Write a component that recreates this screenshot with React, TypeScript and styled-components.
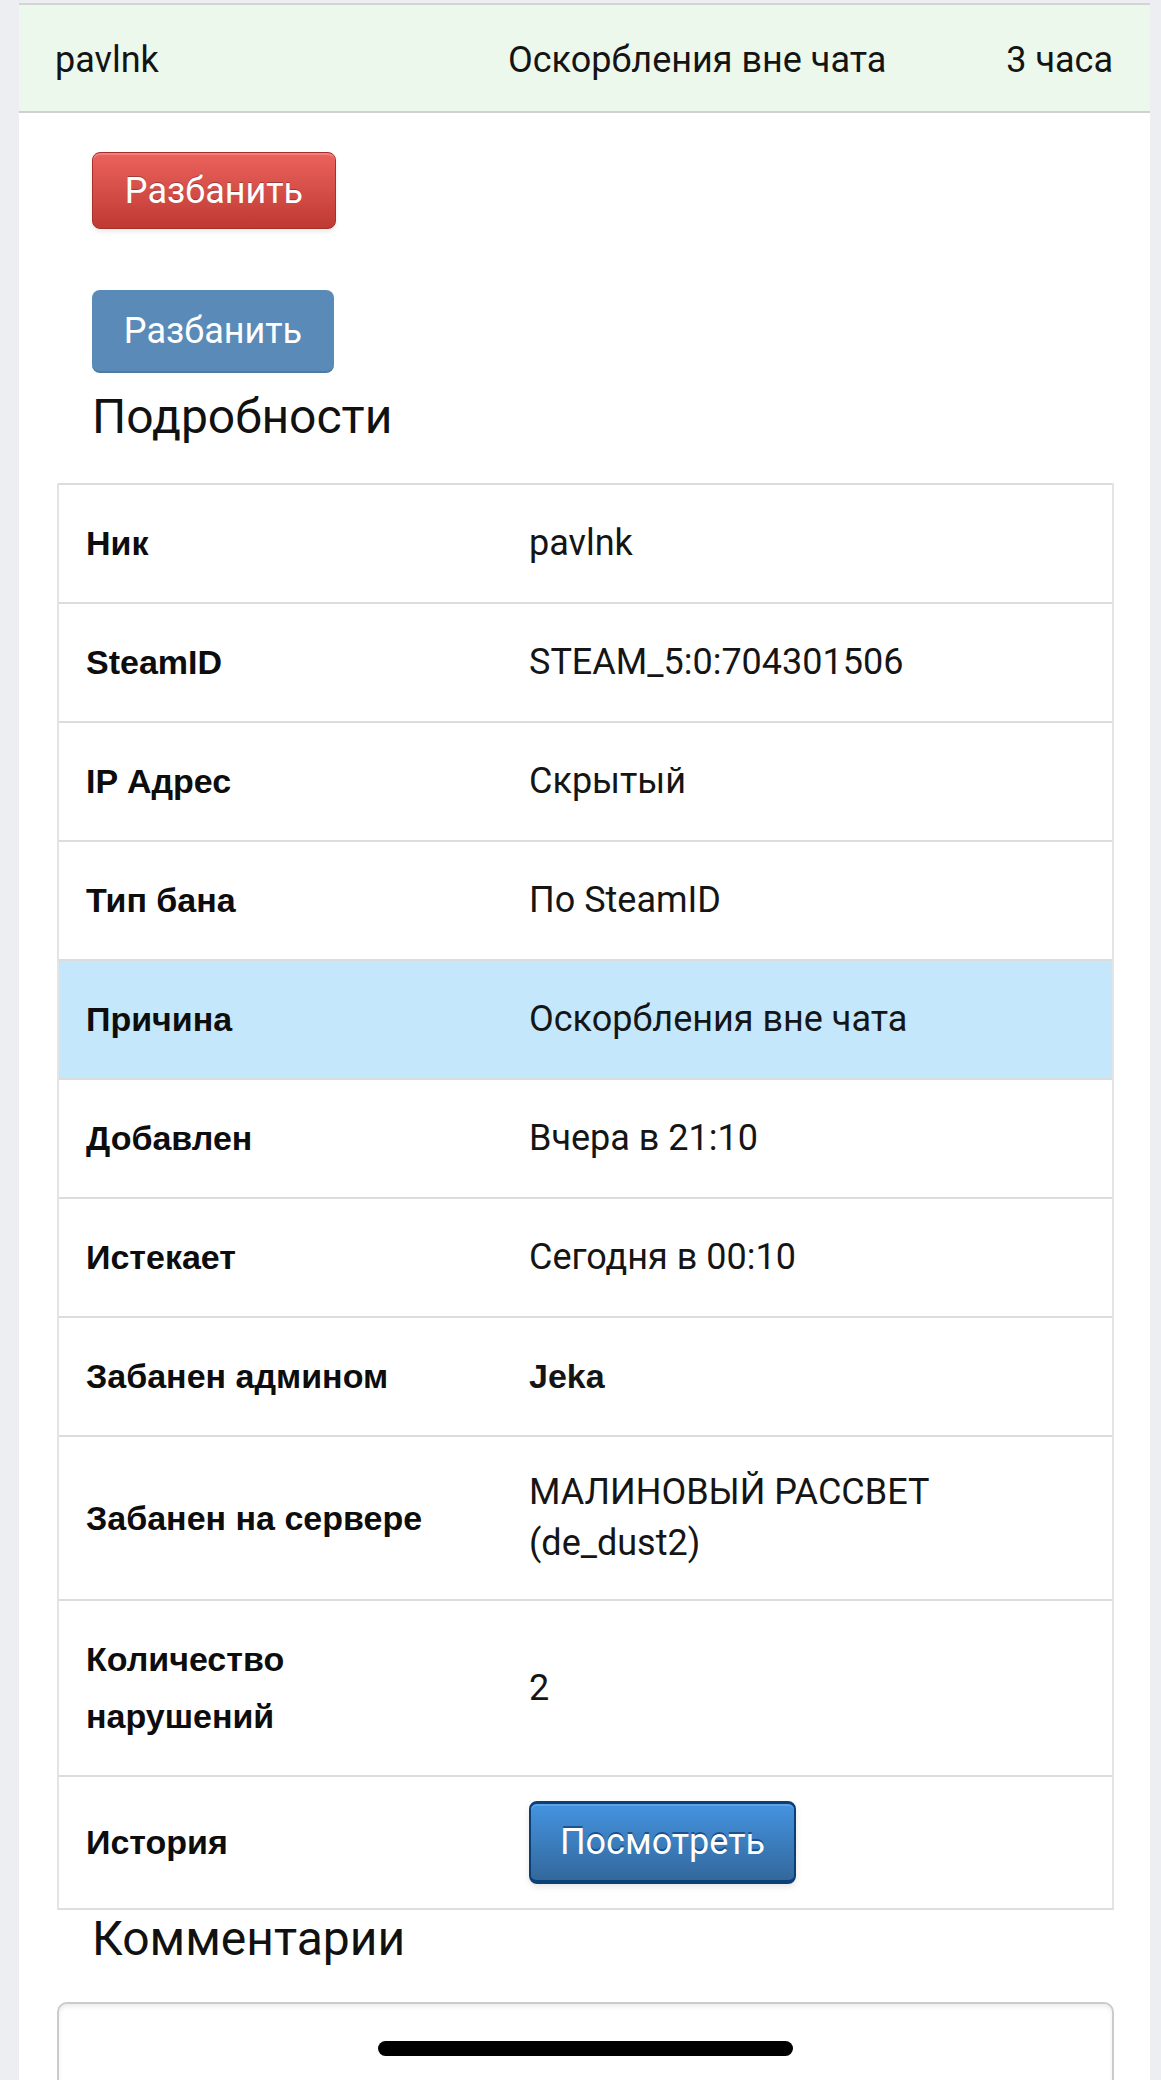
import React from "react";
import styled, { createGlobalStyle, css } from "styled-components";

const GlobalStyle = createGlobalStyle`
  html, body {
    margin: 0;
    padding: 0;
    background: #eceef1;
  }
  body {
    font-family: Roboto, "Noto Sans", "Liberation Sans", sans-serif;
    color: #141414;
    -webkit-font-smoothing: antialiased;
  }
`;

const Page = styled.div`
  padding: 3px 11px 0 19px;
`;

const Card = styled.main`
  background: #ffffff;
  min-height: 2120px;
`;

const SummaryRow = styled.div`
  display: grid;
  grid-template-columns: 453px auto 1fr;
  align-items: center;
  height: 110px;
  padding: 4px 37px 0 36px;
  box-sizing: border-box;
  background: #edf8ec;
  border-top: 2px solid #d3d5d3;
  border-bottom: 2px solid #cfd1cf;
  font-size: 36px;
`;

const SummaryCell = styled.span<{ $right?: boolean }>`
  white-space: nowrap;
  text-align: ${(p) => (p.$right ? "right" : "left")};
`;

const Body = styled.div`
  padding: 0 36px 0 38px;
`;

const Actions = styled.div`
  display: flex;
  flex-direction: column;
  align-items: flex-start;
  gap: 61px;
  padding: 39px 0 0 35px;
`;

const buttonBase = css`
  display: inline-flex;
  align-items: center;
  justify-content: center;
  box-sizing: border-box;
  font-family: Roboto, "Noto Sans", sans-serif;
  font-size: 36px;
  color: #ffffff;
  border-radius: 8px;
  cursor: pointer;
`;

const DangerButton = styled.button`
  ${buttonBase};
  width: 244px;
  height: 77px;
  border: 1px solid #a7302b;
  background: linear-gradient(#ec625d, #bf3a33);
  box-shadow: inset 0 2px 0 rgba(255, 255, 255, 0.2), 0 3px 5px rgba(0, 0, 0, 0.08);
  text-shadow: 0 -1px 0 rgba(0, 0, 0, 0.3);
`;

const MutedButton = styled.button`
  ${buttonBase};
  width: 242px;
  height: 83px;
  border: none;
  border-bottom: 2px solid #4d7aa3;
  background: #5a8bb8;
`;

const PrimaryButton = styled.button`
  ${buttonBase};
  width: 267px;
  height: 83px;
  border: 2px solid #0b3f78;
  border-top-width: 3px;
  border-bottom-width: 4px;
  background: linear-gradient(#4493e0, #33689c);
  box-shadow: inset 0 2px 0 rgba(255, 255, 255, 0.15), 0 3px 6px rgba(0, 0, 0, 0.1);
  text-shadow: 0 -2px 0 rgba(0, 40, 90, 0.55);
`;

const SectionTitle = styled.h2<{ $top: number; $bottom: number }>`
  margin: ${(p) => p.$top}px 0 ${(p) => p.$bottom}px 35px;
  font-family: Roboto, "Noto Sans", sans-serif;
  font-size: 48px;
  font-weight: 400;
  line-height: 52px;
  color: #111;
`;

const Table = styled.div`
  border-left: 2px solid #e4e4e4;
  border-right: 2px solid #e4e4e4;
  border-bottom: 2px solid #dedede;
`;

const Row = styled.div<{ $highlight?: boolean; $pad?: number }>`
  display: grid;
  grid-template-columns: 441px 1fr;
  border-top: 2px solid #dcdcdc;
  background: ${(p) => (p.$highlight ? "#c5e7fb" : "#ffffff")};

  & > * {
    padding: ${(p) => p.$pad ?? 30}px 30px ${(p) => p.$pad ?? 30}px 29px;
  }
  & > *:first-child {
    padding-left: 27px;
  }
`;

const Label = styled.div`
  display: flex;
  align-items: center;
  font-family: "Liberation Sans", Arial, sans-serif;
  font-weight: 700;
  font-size: 34px;
  line-height: 57px;
  color: #0d0d0d;
`;

const Value = styled.div<{ $bold?: boolean }>`
  display: flex;
  align-items: center;
  font-family: ${(p) =>
    p.$bold ? `"Liberation Sans", Arial, sans-serif` : `Roboto, "Noto Sans", sans-serif`};
  font-weight: ${(p) => (p.$bold ? 700 : 400)};
  font-size: ${(p) => (p.$bold ? 34 : 36)}px;
  line-height: 51px;
  color: #151515;
`;

const CommentBox = styled.div`
  height: 150px;
  border: 2px solid #cbcbcb;
  border-radius: 10px;
  box-shadow: inset 0 3px 4px rgba(0, 0, 0, 0.07);
`;

const HomeIndicator = styled.div`
  position: fixed;
  left: 378px;
  bottom: 24px;
  width: 415px;
  height: 15px;
  border-radius: 8px;
  background: #000;
`;

type Item = {
  label: React.ReactNode;
  value: React.ReactNode;
  highlight?: boolean;
  bold?: boolean;
};

const items: Item[] = [
  { label: "Ник", value: "pavlnk" },
  { label: "SteamID", value: "STEAM_5:0:704301506" },
  { label: "IP Адрес", value: "Скрытый" },
  { label: "Тип бана", value: "По SteamID" },
  { label: "Причина", value: "Оскорбления вне чата", highlight: true },
  { label: "Добавлен", value: "Вчера в 21:10" },
  { label: "Истекает", value: "Сегодня в 00:10" },
  { label: "Забанен админом", value: "Jeka", bold: true },
  {
    label: "Забанен на сервере",
    value: (
      <>
        МАЛИНОВЫЙ РАССВЕТ
        <br />
        (de_dust2)
      </>
    ),
  },
  {
    label: (
      <>
        Количество
        <br />
        нарушений
      </>
    ),
    value: "2",
  },
];

export default function App() {
  return (
    <>
      <GlobalStyle />
      <Page>
        <Card>
          <SummaryRow>
            <SummaryCell>pavlnk</SummaryCell>
            <SummaryCell>Оскорбления вне чата</SummaryCell>
            <SummaryCell $right>3 часа</SummaryCell>
          </SummaryRow>
          <Body>
            <Actions>
              <DangerButton>Разбанить</DangerButton>
              <MutedButton>Разбанить</MutedButton>
            </Actions>
            <SectionTitle $top={18} $bottom={40}>
              Подробности
            </SectionTitle>
            <Table>
              {items.map((it, i) => (
                <Row key={i} $highlight={it.highlight}>
                  <Label>{it.label}</Label>
                  <Value $bold={it.bold}>{it.value}</Value>
                </Row>
              ))}
              <Row $pad={24}>
                <Label>История</Label>
                <Value>
                  <PrimaryButton>Посмотреть</PrimaryButton>
                </Value>
              </Row>
            </Table>
            <SectionTitle $top={3} $bottom={37}>
              Комментарии
            </SectionTitle>
            <CommentBox />
          </Body>
        </Card>
      </Page>
      <HomeIndicator />
    </>
  );
}
